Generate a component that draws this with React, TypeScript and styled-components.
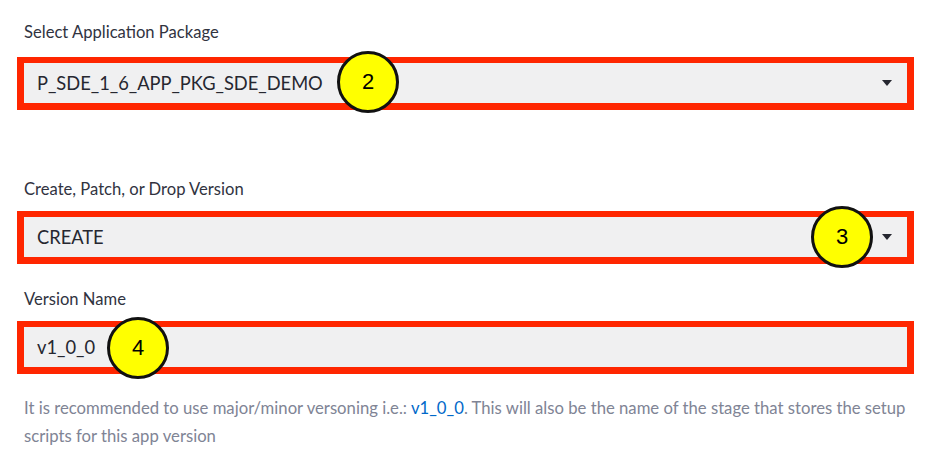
import React from "react";
import styled, { createGlobalStyle } from "styled-components";

const GlobalStyle = createGlobalStyle`
  body {
    margin: 0;
    background: #ffffff;
    font-family: "Lato", "Noto Sans", sans-serif;
    color: #31333f;
  }
`;

export default function App() {
  return (
    <>
      <GlobalStyle />
      <Page>
        <Field>
          <Label space={15}>Select Application Package</Label>
          <SelectBox>
            <Value>P_SDE_1_6_APP_PKG_SDE_DEMO</Value>
            <Caret />
            <Badge left={313} top={-12}>2</Badge>
          </SelectBox>
        </Field>

        <Field gap={69}>
          <Label>Create, Patch, or Drop Version</Label>
          <SelectBox>
            <Value>CREATE</Value>
            <Caret />
            <Badge left={787} top={-11}>3</Badge>
          </SelectBox>
        </Field>

        <Field gap={25}>
          <Label>Version Name</Label>
          <SelectBox>
            <Value>v1_0_0</Value>
            <Badge left={83} top={-10}>4</Badge>
          </SelectBox>
        </Field>

        <Help>
          It is recommended to use major/minor versoning i.e.: <Code>v1_0_0</Code>. This will also
          be the name of the stage that stores the setup scripts for this app version
        </Help>
      </Page>
    </>
  );
}

const Page = styled.div`
  width: 936px;
  padding: 22px 22px 0 17px;
  box-sizing: border-box;
`;

const Field = styled.div<{ gap?: number }>`
  display: flex;
  flex-direction: column;
  margin-top: ${(p) => p.gap ?? 0}px;
`;

const Label = styled.div<{ space?: number }>`
  height: 20px;
  line-height: 20px;
  font-size: 16.6px;
  padding-left: 7px;
  margin-bottom: ${(p) => p.space ?? 12}px;
  color: #31333f;
`;

const SelectBox = styled.div`
  position: relative;
  display: flex;
  align-items: center;
  justify-content: space-between;
  height: 40px;
  border: 7px solid #ff2600;
  border-top-width: 6px;
  background: #f0f0f1;
  padding: 0 15px 0 13px;
`;

const Value = styled.span`
  font-size: 18.3px;
  color: #262730;
`;

const Caret = styled.span`
  width: 0;
  height: 0;
  border-left: 5px solid transparent;
  border-right: 5px solid transparent;
  border-top: 6px solid #262730;
`;

const Badge = styled.div<{ left: number; top: number }>`
  position: absolute;
  left: ${(p) => p.left}px;
  top: ${(p) => p.top}px;
  width: 56px;
  height: 56px;
  border-radius: 50%;
  background: #ffff00;
  border: 3px solid #111111;
  display: flex;
  align-items: center;
  justify-content: center;
  font-family: "Liberation Sans", Arial, sans-serif;
  font-size: 22px;
  color: #000000;
`;

const Help = styled.p`
  margin: 20px 0 0 7px;
  width: 885px;
  font-size: 16.7px;
  line-height: 28px;
  color: #808495;
`;

const Code = styled.span`
  color: #0068c9;
`;
